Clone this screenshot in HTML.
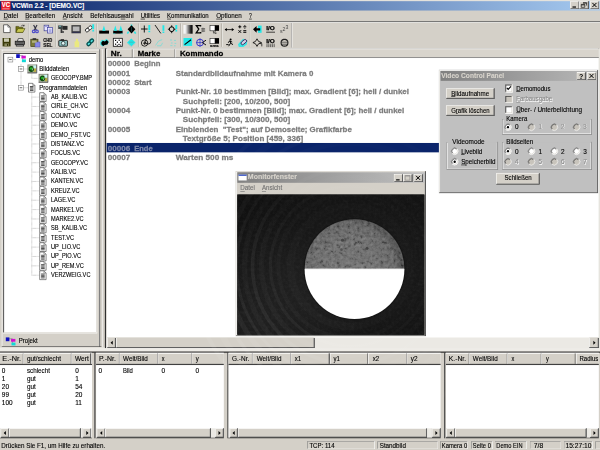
<!DOCTYPE html><html><head><meta charset="utf-8"><title>VCWin</title><style>html,body{margin:0;padding:0}body{width:600px;height:450px;overflow:hidden;background:#d4d0c8;position:relative}
#s{position:absolute;left:0;top:0;width:1024px;height:768px;transform:translateZ(0) scale(.5859375);transform-origin:0 0;font-family:"Liberation Sans",sans-serif;font-size:11px}
#s div,#s svg,#s span{position:absolute;display:block}
#s svg{overflow:visible}
.t{white-space:pre;transform-origin:0 50%}
.t u{text-decoration:underline;text-underline-offset:1px}
.raised{box-shadow:inset -1px -1px #404040,inset 1px 1px #d4d0c8,inset -2px -2px #808080,inset 2px 2px #fff}
.btn{box-shadow:inset -1px -1px #404040,inset 1px 1px #fff,inset -2px -2px #808080,inset 2px 2px #d4d0c8}
.sunk{box-shadow:inset -1px -1px #fff,inset 1px 1px #808080,inset -2px -2px #d4d0c8,inset 2px 2px #404040}
.stat{box-shadow:inset -1px -1px #fff,inset 1px 1px #808080}
.grp{box-shadow:inset 1px 1px #808080,inset -1px -1px #fff,inset 2px 2px #fff,-1px -1px 0 0 transparent;border-right:1px solid #808080;border-bottom:1px solid #808080;box-sizing:border-box}
.track{background:#ebe9e4}
</style></head><body><div id="s"><div class="" style="left:0.0px;top:0.0px;width:1024.0px;height:18.01px;background:linear-gradient(90deg,#0a246a 0%,#a6caf0 100%)"></div>
<div style="left:0.0px;top:0.0px;width:1024.0px;height:1.6px;background:#e4e2dc"></div>
<div class="" style="left:2.05px;top:1.71px;width:15.53px;height:15.36px;background:#e8202c"></div>
<span class="t" style="left:2.9px;top:0.02px;font-size:13px;line-height:16px;font-weight:700;color:#fff;transform:scaleX(0.7745);-webkit-text-stroke:.2px #fff;">VC</span>
<div class="" style="left:3.75px;top:13.65px;width:12.29px;height:2.22px;background:#f8a0a8;opacity:.75"></div>
<span class="t" style="left:19.8px;top:2.55px;font-size:11px;line-height:13px;font-weight:700;color:#fff;transform:scaleX(1.0116);-webkit-text-stroke:.2px #fff;">VCWin 2.2 - [DEMO.VC]</span>
<div class="btn" style="left:973px;top:2px;width:16px;height:14px;background:#d4d0c8"></div>
<svg style="left:973px;top:2px" width="16" height="14" viewBox="0 0 16 14"><rect x="4" y="9" width="6" height="2" fill="#000"/></svg>
<div class="btn" style="left:989px;top:2px;width:16px;height:14px;background:#d4d0c8"></div>
<svg style="left:989px;top:2px" width="16" height="14" viewBox="0 0 16 14"><path d="M6 2.5h6v5M6 3.5h6M3 5.5h6v5h-6zM3 6.5h6" fill="none" stroke="#000"/></svg>
<div class="btn" style="left:1007px;top:2px;width:16px;height:14px;background:#d4d0c8"></div>
<svg style="left:1007px;top:2px" width="16" height="14" viewBox="0 0 16 14"><path d="M4 3l7 7M11 3l-7 7" stroke="#000" stroke-width="1.7" fill="none"/></svg>
<span class="t" style="left:5.63px;top:21.32px;font-size:11px;line-height:13px;font-weight:400;color:#000;transform:scaleX(0.9767);-webkit-text-stroke:.2px #000;"><u>D</u>atei</span>
<span class="t" style="left:42.67px;top:21.32px;font-size:11px;line-height:13px;font-weight:400;color:#000;transform:scaleX(0.9621);-webkit-text-stroke:.2px #000;"><u>B</u>earbeiten</span>
<span class="t" style="left:106.67px;top:21.32px;font-size:11px;line-height:13px;font-weight:400;color:#000;transform:scaleX(0.9460);-webkit-text-stroke:.2px #000;"><u>A</u>nsicht</span>
<span class="t" style="left:153.6px;top:21.32px;font-size:11px;line-height:13px;font-weight:400;color:#000;transform:scaleX(0.9590);-webkit-text-stroke:.2px #000;">Befehlsaus<u>w</u>ahl</span>
<span class="t" style="left:239.79px;top:21.32px;font-size:11px;line-height:13px;font-weight:400;color:#000;transform:scaleX(0.9387);-webkit-text-stroke:.2px #000;"><u>U</u>tilities</span>
<span class="t" style="left:285.35px;top:21.32px;font-size:11px;line-height:13px;font-weight:400;color:#000;transform:scaleX(0.9363);-webkit-text-stroke:.2px #000;"><u>K</u>ommunikation</span>
<span class="t" style="left:368.98px;top:21.32px;font-size:11px;line-height:13px;font-weight:400;color:#000;transform:scaleX(0.9746);-webkit-text-stroke:.2px #000;"><u>O</u>ptionen</span>
<span class="t" style="left:425.3px;top:21.32px;font-size:11px;line-height:13px;font-weight:400;color:#000;transform:scaleX(0.7804);-webkit-text-stroke:.2px #000;"><u>?</u></span>
<div style="left:0.0px;top:36.35px;width:1024.0px;height:1.3px;background:#707070"></div>
<div style="left:0.0px;top:37.63px;width:1024.0px;height:1px;background:#fff"></div>
<div style="left:0.0px;top:81.75px;width:179.2px;height:1px;background:#909090"></div>
<div style="left:0.0px;top:82.77px;width:179.2px;height:1px;background:#fff"></div>
<div style="left:179.2px;top:81.83px;width:842.41px;height:1.3px;background:#505050"></div>
<div style="left:496.98px;top:39.25px;width:1px;height:41.81px;background:#808080"></div>
<div style="left:498.01px;top:39.25px;width:1px;height:41.81px;background:#fff"></div>
<div style="left:47.62px;top:40.11px;width:1px;height:40.11px;background:#a09c94"></div>
<div style="left:48.64px;top:40.11px;width:1px;height:40.11px;background:#f4f4f0"></div>
<div style="left:94.72px;top:40.11px;width:1px;height:40.11px;background:#a09c94"></div>
<div style="left:95.74px;top:40.11px;width:1px;height:40.11px;background:#f4f4f0"></div>
<div style="left:164.86px;top:40.11px;width:1px;height:40.11px;background:#a09c94"></div>
<div style="left:165.89px;top:40.11px;width:1px;height:40.11px;background:#f4f4f0"></div>
<div style="left:235.52px;top:40.11px;width:1px;height:40.11px;background:#a09c94"></div>
<div style="left:236.54px;top:40.11px;width:1px;height:40.11px;background:#f4f4f0"></div>
<div style="left:308.39px;top:40.11px;width:1px;height:40.11px;background:#a09c94"></div>
<div style="left:309.42px;top:40.11px;width:1px;height:40.11px;background:#f4f4f0"></div>
<div style="left:378.03px;top:40.11px;width:1px;height:40.11px;background:#a09c94"></div>
<div style="left:379.05px;top:40.11px;width:1px;height:40.11px;background:#f4f4f0"></div>
<div style="left:425.3px;top:40.11px;width:1px;height:40.11px;background:#a09c94"></div>
<div style="left:426.33px;top:40.11px;width:1px;height:40.11px;background:#f4f4f0"></div>
<svg style="left:0;top:0" width="1024" height="768" viewBox="0 0 600 450"><path d="M3.6 24.8h4.3l2.3 2.3v5.5h-6.6z" fill="#fff" stroke="#303030" stroke-width=".7"/><path d="M7.9 24.8v2.3h2.3" fill="none" stroke="#303030" stroke-width=".6"/><path d="M15.9 26.4h2.6l.7.8h3.6v5.1h-6.9z" fill="#707010" stroke="#303000" stroke-width=".5"/><path d="M17.9 28.6h7.1l-2.1 3.8h-7z" fill="#c8c850" stroke="#303000" stroke-width=".5"/><path d="M21.2 25.9q1.5-1.4 3 0m0 0l-.2-1.2m.2 1.2l-1.2.1" fill="none" stroke="#202020" stroke-width=".6"/><path d="M33.6 25.1L36.4 30.3M37 25.1L34.2 30.3" stroke="#303040" stroke-width="1.15" fill="none"/><circle cx="33.7" cy="31.4" r="1.3" fill="none" stroke="#5050c8" stroke-width="1.2"/><circle cx="37" cy="31.4" r="1.3" fill="none" stroke="#5050c8" stroke-width="1.2"/><rect x="44.1" y="25.2" width="4.6" height="5.6" fill="#e8e8ff" stroke="#404090" stroke-width=".7"/><rect x="47.6" y="27.4" width="5" height="5.6" fill="#f4f4ff" stroke="#4040a0" stroke-width=".7"/><path d="M48.6 29.2h3M48.6 30.4h3M48.6 31.6h3M45 26.6h2.6" stroke="#5050c0" stroke-width=".5"/><rect x="58.2" y="25.4" width="4.6" height="3.6" fill="#404848"/><rect x="62.6" y="25.9" width="4.9" height="3.9" fill="#282828"/><rect x="60.6" y="28.8" width="1.7" height="4.2" fill="#383838"/><rect x="62" y="31.2" width="2" height="1.6" fill="#484848"/><path d="M59 26.3h2" stroke="#80e0e0" stroke-width=".7"/><rect x="71.4" y="25.1" width="9.5" height="8.2" fill="#404040"/><rect x="72.8" y="26.5" width="6.7" height="4.7" fill="#b8b8b8"/><path d="M72.5 32.3h7.3" stroke="#202060" stroke-width=".6"/><g fill="#fff" stroke="#282828" stroke-width=".9"><rect x="85.3" y="28.4" width="4.2" height="3.2" rx="1.5" transform="rotate(-35 87.4 30)"/><rect x="88" y="26.2" width="4.2" height="3.2" rx="1.5" transform="rotate(-35 90.1 27.8)"/></g><path d="M93.2 24.3V29.3" stroke="#20e8e8" stroke-width="1.9"/><rect x="92.3" y="30.1" width="1.8" height="1.4" fill="#20e8e8"/><rect x="99.2" y="30.6" width="9.8" height="3" fill="#000"/><path d="M103.9 25.6l1.6 5.2h-3.2z" fill="#20e8e8"/><rect x="113.2" y="30.6" width="9.4" height="3" fill="#000"/><path d="M115.3 25.4l1.6 5.4h-3.2zM120.8 25.4l1.6 5.4h-3.2z" fill="#20e8e8"/><path d="M113.2 33.7h2.2M120.6 33.7h2.2" stroke="#20e8e8" stroke-width=".5"/><path d="M128.6 31.6l-1.2 2M134.4 31.6l1.2 2M131.5 24.6v1.5" stroke="#20e8e8" stroke-width="1.5"/><path d="M131.5 25.2l3.9 4.1-3.9 4.1-3.9-4.1z" fill="#000"/><path d="M131.5 27v4.6" stroke="#105050" stroke-width=".7"/><path d="M141 29h6.6M144.3 25.5v7" stroke="#000" stroke-width=".9"/><path d="M149.3 25V30.000000000000004" stroke="#20e8e8" stroke-width="1.9"/><rect x="148.4" y="30.800000000000004" width="1.8" height="1.4" fill="#20e8e8"/><path d="M155 25l5.8 8.4" stroke="#101010" stroke-width=".9"/><path d="M163.4 25.3V30.8" stroke="#20e8e8" stroke-width="1.9"/><rect x="162.5" y="31.6" width="1.8" height="1.4" fill="#20e8e8"/><circle cx="171.7" cy="29.2" r="2.4" fill="none" stroke="#000" stroke-width="1"/><path d="M171.7 25.3v2M171.7 31v2.2M167.9 29.2h2M173.6 29.2h2" stroke="#000" stroke-width=".9"/><path d="M176.3 25V29.3" stroke="#20e8e8" stroke-width="1.9"/><rect x="175.4" y="30.1" width="1.8" height="1.4" fill="#20e8e8"/><defs><linearGradient id="gwb"><stop offset="0" stop-color="#fff"/><stop offset=".25" stop-color="#e8e8e8"/><stop offset=".8" stop-color="#202020"/><stop offset="1" stop-color="#000"/></linearGradient></defs><rect x="183.5" y="25" width="9.1" height="8.7" fill="url(#gwb)"/><path d="M200.6 26.4v-.8h-4.3l2.5 3.5-2.6 3.7h4.5v-.9" fill="none" stroke="#000" stroke-width="1.25"/><path d="M201.3 28.6h3.8M201.3 29.9h3.8M201.3 31.2h3.8" stroke="#404040" stroke-width=".7"/><path d="M202.9 27.6v4.6" stroke="#404040" stroke-width=".5"/><rect x="210" y="25.5" width="5" height="5.3" fill="#fff" stroke="#202020" stroke-width=".6"/><rect x="215" y="25.2" width="4" height="5.6" fill="#000"/><text x="214.6" y="34" font-family="Liberation Sans" font-weight="700" font-size="4.2" text-anchor="middle" fill="#101010">%</text><path d="M225 29.6h8.6" stroke="#000" stroke-width=".8"/><path d="M224.6 29.6l2.2-1.6v3.2zM234 29.6l-2.2-1.6v3.2z" fill="#000"/><path d="M238.3 26.8h3M239.8 25.3v3M243.3 26.8h3M238.5 30.2l2.6 2.6M241.1 30.2l-2.6 2.6M243.3 30.7h3M243.3 32.3h3" stroke="#000" stroke-width="1"/><rect x="244.4" y="25" width=".9" height=".9" fill="#000"/><rect x="244.4" y="27.8" width=".9" height=".9" fill="#000"/><rect x="258" y="25.6" width="3.6" height="7.2" fill="#20e8e8"/><path d="M253 29.3l3.6-3.4v2.3h3.6v2.2h-3.6v2.3z" fill="#000"/><text x="270.5" y="30.4" font-family="Liberation Sans" font-weight="700" font-size="5.6" text-anchor="middle" textLength="8.6" lengthAdjust="spacingAndGlyphs" fill="#000" stroke="#000" stroke-width=".25">I/O</text><path d="M266.2 32.2h8.8" stroke="#000" stroke-width=".7"/><text x="280" y="33" font-family="Liberation Sans" font-size="5.2" fill="#484848">s</text><text x="282.6" y="31" font-family="Liberation Sans" font-size="5.2" fill="#484848">2</text><text x="285.4" y="29.4" font-family="Liberation Sans" font-size="5.2" fill="#484848">3</text><rect x="2.6" y="38" width="8" height="8.4" fill="#3a3a08"/><rect x="4" y="38.4" width="5" height="3.4" fill="#c8c8b0"/><rect x="4.4" y="43.4" width="4.4" height="3" fill="#8a8a60"/><rect x="7" y="43.9" width="1.1" height="2" fill="#303008"/><path d="M17.3 41.4l1-2.8h4.6l.6 2.8z" fill="#f0f0f0" stroke="#202020" stroke-width=".7"/><rect x="15.2" y="41.2" width="9.3" height="3.4" fill="#686868" stroke="#101010" stroke-width=".7"/><path d="M16.6 44.6h6.6l.6 1.5h-7.8z" fill="#b0b0b0" stroke="#101010" stroke-width=".7"/><path d="M16.4 42.8h6.8" stroke="#404040" stroke-width=".5"/><rect x="30.8" y="39.2" width="7.2" height="7.4" fill="#7c7c38" stroke="#303010" stroke-width=".6"/><rect x="32.6" y="38.2" width="3.6" height="1.8" fill="#303030"/><rect x="35" y="42" width="5" height="5" fill="#8888e8" stroke="#5050a0" stroke-width=".5"/><rect x="32" y="40.6" width="4.6" height="2.2" fill="#b0b080"/><text x="47.8" y="42.2" font-family="Liberation Sans" font-weight="700" font-size="4.9" text-anchor="middle" textLength="9" lengthAdjust="spacingAndGlyphs" fill="#101010" stroke="#101010" stroke-width=".2">CHD</text><text x="47.8" y="46.8" font-family="Liberation Sans" font-weight="700" font-size="4.9" text-anchor="middle" textLength="9" lengthAdjust="spacingAndGlyphs" fill="#101010" stroke="#101010" stroke-width=".2">SEL</text><rect x="58.8" y="40.4" width="8.6" height="5.8" rx=".6" fill="#90c8c8" stroke="#181818" stroke-width=".9"/><rect x="60.6" y="39.2" width="3.4" height="1.4" fill="#202020"/><circle cx="63.2" cy="43.3" r="1.9" fill="#e0f4f4" stroke="#283838" stroke-width=".8"/><rect x="74.6" y="41.4" width="4.6" height="5.8" fill="#f2f268" opacity=".75"/><rect x="75.9" y="38.8" width="2" height="3" fill="#f2f268" opacity=".75"/><path d="M86.4 43.5l3-3 2.4-2.4 2.4 2-2.4 3-2.6 3z" fill="#20e8e8" opacity=".75"/><g fill="none" stroke="#0c5050" stroke-width="1.35"><rect x="86.9" y="42.3" width="4" height="3" rx="1.4" transform="rotate(-40 88.9 43.8)"/><rect x="89.6" y="39.4" width="4" height="3" rx="1.4" transform="rotate(-40 91.6 40.9)"/></g><path d="M100 42.6l2-2.8 2.2.8 2.4-1.8 2.4 2.6-1.4 3-3.2.8-1.8 1.2-2.2-1.6z" fill="#20e8e8" opacity=".8"/><path d="M101.2 42.8l1.6-2 2 .8 2-1.6 1.8 2-1.2 2.6-2.8.4-1.4 1-1.6-1.2z" fill="#000"/><rect x="113.3" y="38.3" width="9" height="8" fill="#fff" stroke="#101010" stroke-width=".8"/><g fill="#000"><rect x="115" y="39.8" width="1.2" height="1.2"/><rect x="118.6" y="39.6" width="1.2" height="1.2"/><rect x="116.8" y="41.6" width="1.2" height="1.2"/><rect x="120" y="41.8" width="1.1" height="1.1"/><rect x="115" y="43.6" width="1.2" height="1.2"/><rect x="118.4" y="43.8" width="1.2" height="1.2"/><rect x="120.2" y="44.6" width="1" height="1"/><rect x="116.8" y="44.8" width="1" height="1"/></g><path d="M131.3 38.6l4.2 3.8-4.2 3.8-4.2-3.8z" fill="#20e8e8"/><path d="M127.4 43.4l3.9 3.2 3.9-3.2" fill="none" stroke="#90c8c8" stroke-width=".8"/><path d="M129 42.2h4.6" stroke="#60a0a0" stroke-width=".6"/><circle cx="144.6" cy="43" r="3.2" fill="none" stroke="#000" stroke-width=".8"/><circle cx="148" cy="41.2" r="2.9" fill="none" stroke="#000" stroke-width=".8"/><path d="M143 43.2h3.4M144.7 41.5v3.4" stroke="#000" stroke-width=".8"/><g opacity=".4" stroke="#20e8e8" stroke-width="1" fill="none"><path d="M155.6 45.4l3-4.4 3.6-1.4M157 45.8h4l1.6-3"/></g><g opacity=".4" stroke="#20e8e8" stroke-width="1" fill="none"><path d="M170 40h2M174 40.4h2M171 43h1.6M174.6 43.4h1.6M170.4 45.6h2M174 45.8h1.6"/></g><rect x="183.5" y="38" width="8.6" height="7.9" fill="#20e8e8"/><path d="M184.6 44.6l6.4-4.8" stroke="#000" stroke-width="1.1"/><circle cx="200" cy="42.6" r="3.4" fill="none" stroke="#2828c8" stroke-width=".9"/><path d="M200 38.4v8.4M196.4 42.6h5.6" stroke="#2828c8" stroke-width=".7"/><path d="M206 40.2l-3.6 2.4 3.6 2.4" fill="none" stroke="#000" stroke-width=".9"/><rect x="210" y="38.4" width="5" height="5.3" fill="#fff" stroke="#202020" stroke-width=".6"/><rect x="215" y="38.1" width="4" height="5.6" fill="#000"/><text x="214.4" y="47" font-family="Liberation Sans" font-weight="700" font-size="4.4" text-anchor="middle" fill="#101010" stroke="#101010" stroke-width=".2">sms</text><circle cx="230.6" cy="39.5" r="1" fill="#000"/><path d="M229.8 40.6l-1.6 2.2M230 40.8l.6 2.4-2 3M230.6 43.2l2.4 1.4M229.6 41.2l2.6.8M226.2 44.6h2.4" stroke="#000" stroke-width=".95" fill="none"/><path d="M238 44.2l5-5.4 4.4 1.4-.6 4.4-3.4 2.4h-4.6z" fill="#20e8e8" opacity=".85"/><rect x="240.6" y="40.6" width="6.4" height="3" rx="1.5" transform="rotate(-40 243.8 42.1)" fill="#d0d0e8" stroke="#402860" stroke-width=".9"/><path d="M257 38.8l1.5 2.6 3 1.2-3 1.2-1.5 2.6-1.5-2.6-2.6-1.2 2.6-1.2z" fill="none" stroke="#000" stroke-width=".8"/><path d="M259.4 43.6h2.4v2.8" fill="none" stroke="#000" stroke-width=".7"/><text x="270.5" y="43" font-family="Liberation Sans" font-weight="700" font-size="5.6" text-anchor="middle" textLength="8.6" lengthAdjust="spacingAndGlyphs" fill="#000" stroke="#000" stroke-width=".25">I/O</text><path d="M266.4 44.2h8.6M266.4 45.4h8.6M266.4 46.6h8.6" stroke="#303030" stroke-width=".7" stroke-dasharray="1.2 .6"/><circle cx="284.5" cy="42.8" r="3.4" fill="none" stroke="#202020" stroke-width="1.15"/><path d="M281 42.2h7M282 44.2h5" stroke="#303030" stroke-width=".7"/><path d="M282.2 40.2l1.2-1M286.8 40.2l-1.2-1" stroke="#303030" stroke-width=".7"/></svg>
<div style="left:2.73px;top:84.65px;width:1px;height:507.56px;background:#fff"></div>
<div style="left:2.73px;top:84.65px;width:167.94px;height:1px;background:#fff"></div>
<div class="sunk" style="left:5.46px;top:90.28px;width:160.6px;height:478.72px;background:#fff"></div>
<div style="left:169.13px;top:83.63px;width:1.4px;height:508.59px;background:#808080"></div>
<div style="left:174.42px;top:83.63px;width:1px;height:509.44px;background:#fff"></div>
<div style="left:3.41px;top:591.02px;width:169.81px;height:1.4px;background:#404040"></div>
<div class="" style="left:0.0px;top:593.24px;width:1024.0px;height:6.66px;background:#eeece7"></div>
<span class="t" style="left:32.43px;top:575.99px;font-size:11px;line-height:13px;font-weight:400;color:#000;transform:scaleX(0.9469);-webkit-text-stroke:.2px #000;">Projekt</span>
<span class="t" style="left:49.49px;top:95.22px;font-size:11px;line-height:13px;font-weight:400;color:#000;transform:scaleX(0.8990);-webkit-text-stroke:.2px #000;">demo</span>
<span class="t" style="left:67.41px;top:111.22px;font-size:11px;line-height:13px;font-weight:400;color:#000;transform:scaleX(0.9405);-webkit-text-stroke:.2px #000;">Bilddateien</span>
<span class="t" style="left:87.04px;top:127.22px;font-size:11px;line-height:13px;font-weight:400;color:#000;transform:scaleX(0.8627);-webkit-text-stroke:.2px #000;">GEOCOPY.BMP</span>
<span class="t" style="left:67.41px;top:143.22px;font-size:11px;line-height:13px;font-weight:400;color:#000;transform:scaleX(0.9369);-webkit-text-stroke:.2px #000;">Programmdateien</span>
<span class="t" style="left:87.04px;top:159.22px;font-size:11px;line-height:13px;font-weight:400;color:#000;transform:scaleX(0.8736);-webkit-text-stroke:.2px #000;">AB_KALIB.VC</span>
<span class="t" style="left:87.04px;top:175.22px;font-size:11px;line-height:13px;font-weight:400;color:#000;transform:scaleX(0.8680);-webkit-text-stroke:.2px #000;">CIRLE_CH.VC</span>
<span class="t" style="left:87.04px;top:191.22px;font-size:11px;line-height:13px;font-weight:400;color:#000;transform:scaleX(0.8954);-webkit-text-stroke:.2px #000;">COUNT.VC</span>
<span class="t" style="left:87.04px;top:207.22px;font-size:11px;line-height:13px;font-weight:400;color:#000;transform:scaleX(0.8750);-webkit-text-stroke:.2px #000;">DEMO.VC</span>
<span class="t" style="left:87.04px;top:223.22px;font-size:11px;line-height:13px;font-weight:400;color:#000;transform:scaleX(0.8750);-webkit-text-stroke:.2px #000;">DEMO_FST.VC</span>
<span class="t" style="left:87.04px;top:239.22px;font-size:11px;line-height:13px;font-weight:400;color:#000;transform:scaleX(0.8750);-webkit-text-stroke:.2px #000;">DISTANZ.VC</span>
<span class="t" style="left:87.04px;top:255.22px;font-size:11px;line-height:13px;font-weight:400;color:#000;transform:scaleX(0.8750);-webkit-text-stroke:.2px #000;">FOCUS.VC</span>
<span class="t" style="left:87.04px;top:271.22px;font-size:11px;line-height:13px;font-weight:400;color:#000;transform:scaleX(0.8750);-webkit-text-stroke:.2px #000;">GEOCOPY.VC</span>
<span class="t" style="left:87.04px;top:287.22px;font-size:11px;line-height:13px;font-weight:400;color:#000;transform:scaleX(0.8750);-webkit-text-stroke:.2px #000;">KALIB.VC</span>
<span class="t" style="left:87.04px;top:303.22px;font-size:11px;line-height:13px;font-weight:400;color:#000;transform:scaleX(0.8750);-webkit-text-stroke:.2px #000;">KANTEN.VC</span>
<span class="t" style="left:87.04px;top:319.22px;font-size:11px;line-height:13px;font-weight:400;color:#000;transform:scaleX(0.8750);-webkit-text-stroke:.2px #000;">KREUZ.VC</span>
<span class="t" style="left:87.04px;top:335.22px;font-size:11px;line-height:13px;font-weight:400;color:#000;transform:scaleX(0.8750);-webkit-text-stroke:.2px #000;">LAGE.VC</span>
<span class="t" style="left:87.04px;top:351.22px;font-size:11px;line-height:13px;font-weight:400;color:#000;transform:scaleX(0.8750);-webkit-text-stroke:.2px #000;">MARKE1.VC</span>
<span class="t" style="left:87.04px;top:367.22px;font-size:11px;line-height:13px;font-weight:400;color:#000;transform:scaleX(0.8750);-webkit-text-stroke:.2px #000;">MARKE2.VC</span>
<span class="t" style="left:87.04px;top:383.22px;font-size:11px;line-height:13px;font-weight:400;color:#000;transform:scaleX(0.8750);-webkit-text-stroke:.2px #000;">SB_KALIB.VC</span>
<span class="t" style="left:87.04px;top:399.22px;font-size:11px;line-height:13px;font-weight:400;color:#000;transform:scaleX(0.8750);-webkit-text-stroke:.2px #000;">TEST.VC</span>
<span class="t" style="left:87.04px;top:415.22px;font-size:11px;line-height:13px;font-weight:400;color:#000;transform:scaleX(0.8750);-webkit-text-stroke:.2px #000;">UP_LIO.VC</span>
<span class="t" style="left:87.04px;top:431.22px;font-size:11px;line-height:13px;font-weight:400;color:#000;transform:scaleX(0.8750);-webkit-text-stroke:.2px #000;">UP_PIO.VC</span>
<span class="t" style="left:87.04px;top:447.22px;font-size:11px;line-height:13px;font-weight:400;color:#000;transform:scaleX(0.8750);-webkit-text-stroke:.2px #000;">UP_REM.VC</span>
<span class="t" style="left:87.04px;top:463.22px;font-size:11px;line-height:13px;font-weight:400;color:#000;transform:scaleX(0.8750);-webkit-text-stroke:.2px #000;">VERZWEIG.VC</span>
<svg style="left:0;top:0" width="1024" height="768" viewBox="0 0 600 450"><path d="M7.4 338.79999999999995H12.399999999999999V343.4" fill="none" stroke="#606060" stroke-width=".5"/><rect x="5.8" y="337.4" width="3.6" height="3.8" fill="#1010c0"/><rect x="11.0" y="338.9" width="4.4" height="2.8" fill="#d010d0"/><rect x="11.5" y="342.59999999999997" width="4" height="2.8" fill="#10d8d8"/><path d="M17.8 55.6H22.799999999999997V60.2" fill="none" stroke="#606060" stroke-width=".5"/><rect x="16.2" y="54.2" width="3.6" height="3.8" fill="#1010c0"/><rect x="21.4" y="55.7" width="4.4" height="2.8" fill="#d010d0"/><rect x="21.9" y="59.400000000000006" width="4" height="2.8" fill="#10d8d8"/><rect x="27.400000000000002" y="64.475" width="9.4" height="8.6" fill="#8c8c84"/><path d="M27.400000000000002 73.075h9.4v-8.6" fill="none" stroke="#404040" stroke-width=".6"/><rect x="28.400000000000002" y="65.375" width="7.6" height="6.6" fill="#b8d0b0"/><rect x="33.2" y="65.475" width="2.8" height="2.6" fill="#c8f4f4"/><rect x="33.6" y="68.675" width="2.4" height="3.2" fill="#b8a840"/><ellipse cx="31.3" cy="68.975" rx="2.7" ry="2.9" fill="#0c480c"/><circle cx="31.1" cy="68.575" r="1.25" fill="#20b828"/><path d="M33.4 67.075l-1.2 3.4" stroke="#e8f8e0" stroke-width=".6"/><rect x="38.6" y="73.85" width="9.4" height="8.6" fill="#8c8c84"/><path d="M38.6 82.45h9.4v-8.6" fill="none" stroke="#404040" stroke-width=".6"/><rect x="39.6" y="74.75" width="7.6" height="6.6" fill="#b8d0b0"/><rect x="44.4" y="74.85" width="2.8" height="2.6" fill="#c8f4f4"/><rect x="44.8" y="78.05" width="2.4" height="3.2" fill="#b8a840"/><ellipse cx="42.5" cy="78.35" rx="2.7" ry="2.9" fill="#0c480c"/><circle cx="42.3" cy="77.95" r="1.25" fill="#20b828"/><path d="M44.6 76.45l-1.2 3.4" stroke="#e8f8e0" stroke-width=".6"/><path d="M28.5 83.32499999999999h4.2l2.2 2.2v6.6h-6.4z" fill="#fff" stroke="#585858" stroke-width=".7"/><path d="M32.7 83.32499999999999v2.2h2.2" fill="none" stroke="#585858" stroke-width=".5"/><path d="M29.9 86.52499999999999h3.6M29.9 87.82499999999999h3.6M29.9 89.12499999999999h3.6M29.9 90.42499999999998h3.6" stroke="#303030" stroke-width=".85"/><path d="M39.7 92.69999999999999h4.2l2.2 2.2v6.6h-6.4z" fill="#fff" stroke="#585858" stroke-width=".7"/><path d="M43.900000000000006 92.69999999999999v2.2h2.2" fill="none" stroke="#585858" stroke-width=".5"/><path d="M41.1 95.89999999999999h3.6M41.1 97.19999999999999h3.6M41.1 98.49999999999999h3.6M41.1 99.79999999999998h3.6" stroke="#303030" stroke-width=".85"/><path d="M39.7 102.07499999999999h4.2l2.2 2.2v6.6h-6.4z" fill="#fff" stroke="#585858" stroke-width=".7"/><path d="M43.900000000000006 102.07499999999999v2.2h2.2" fill="none" stroke="#585858" stroke-width=".5"/><path d="M41.1 105.27499999999999h3.6M41.1 106.57499999999999h3.6M41.1 107.87499999999999h3.6M41.1 109.17499999999998h3.6" stroke="#303030" stroke-width=".85"/><path d="M39.7 111.44999999999999h4.2l2.2 2.2v6.6h-6.4z" fill="#fff" stroke="#585858" stroke-width=".7"/><path d="M43.900000000000006 111.44999999999999v2.2h2.2" fill="none" stroke="#585858" stroke-width=".5"/><path d="M41.1 114.64999999999999h3.6M41.1 115.94999999999999h3.6M41.1 117.24999999999999h3.6M41.1 118.54999999999998h3.6" stroke="#303030" stroke-width=".85"/><path d="M39.7 120.82499999999999h4.2l2.2 2.2v6.6h-6.4z" fill="#fff" stroke="#585858" stroke-width=".7"/><path d="M43.900000000000006 120.82499999999999v2.2h2.2" fill="none" stroke="#585858" stroke-width=".5"/><path d="M41.1 124.02499999999999h3.6M41.1 125.32499999999999h3.6M41.1 126.62499999999999h3.6M41.1 127.92499999999998h3.6" stroke="#303030" stroke-width=".85"/><path d="M39.7 130.2h4.2l2.2 2.2v6.6h-6.4z" fill="#fff" stroke="#585858" stroke-width=".7"/><path d="M43.900000000000006 130.2v2.2h2.2" fill="none" stroke="#585858" stroke-width=".5"/><path d="M41.1 133.39999999999998h3.6M41.1 134.7h3.6M41.1 136.0h3.6M41.1 137.29999999999998h3.6" stroke="#303030" stroke-width=".85"/><path d="M39.7 139.575h4.2l2.2 2.2v6.6h-6.4z" fill="#fff" stroke="#585858" stroke-width=".7"/><path d="M43.900000000000006 139.575v2.2h2.2" fill="none" stroke="#585858" stroke-width=".5"/><path d="M41.1 142.77499999999998h3.6M41.1 144.075h3.6M41.1 145.375h3.6M41.1 146.67499999999998h3.6" stroke="#303030" stroke-width=".85"/><path d="M39.7 148.95h4.2l2.2 2.2v6.6h-6.4z" fill="#fff" stroke="#585858" stroke-width=".7"/><path d="M43.900000000000006 148.95v2.2h2.2" fill="none" stroke="#585858" stroke-width=".5"/><path d="M41.1 152.14999999999998h3.6M41.1 153.45h3.6M41.1 154.75h3.6M41.1 156.04999999999998h3.6" stroke="#303030" stroke-width=".85"/><path d="M39.7 158.325h4.2l2.2 2.2v6.6h-6.4z" fill="#fff" stroke="#585858" stroke-width=".7"/><path d="M43.900000000000006 158.325v2.2h2.2" fill="none" stroke="#585858" stroke-width=".5"/><path d="M41.1 161.52499999999998h3.6M41.1 162.825h3.6M41.1 164.125h3.6M41.1 165.42499999999998h3.6" stroke="#303030" stroke-width=".85"/><path d="M39.7 167.7h4.2l2.2 2.2v6.6h-6.4z" fill="#fff" stroke="#585858" stroke-width=".7"/><path d="M43.900000000000006 167.7v2.2h2.2" fill="none" stroke="#585858" stroke-width=".5"/><path d="M41.1 170.89999999999998h3.6M41.1 172.2h3.6M41.1 173.5h3.6M41.1 174.79999999999998h3.6" stroke="#303030" stroke-width=".85"/><path d="M39.7 177.075h4.2l2.2 2.2v6.6h-6.4z" fill="#fff" stroke="#585858" stroke-width=".7"/><path d="M43.900000000000006 177.075v2.2h2.2" fill="none" stroke="#585858" stroke-width=".5"/><path d="M41.1 180.27499999999998h3.6M41.1 181.575h3.6M41.1 182.875h3.6M41.1 184.17499999999998h3.6" stroke="#303030" stroke-width=".85"/><path d="M39.7 186.45h4.2l2.2 2.2v6.6h-6.4z" fill="#fff" stroke="#585858" stroke-width=".7"/><path d="M43.900000000000006 186.45v2.2h2.2" fill="none" stroke="#585858" stroke-width=".5"/><path d="M41.1 189.64999999999998h3.6M41.1 190.95h3.6M41.1 192.25h3.6M41.1 193.54999999999998h3.6" stroke="#303030" stroke-width=".85"/><path d="M39.7 195.825h4.2l2.2 2.2v6.6h-6.4z" fill="#fff" stroke="#585858" stroke-width=".7"/><path d="M43.900000000000006 195.825v2.2h2.2" fill="none" stroke="#585858" stroke-width=".5"/><path d="M41.1 199.02499999999998h3.6M41.1 200.325h3.6M41.1 201.625h3.6M41.1 202.92499999999998h3.6" stroke="#303030" stroke-width=".85"/><path d="M39.7 205.2h4.2l2.2 2.2v6.6h-6.4z" fill="#fff" stroke="#585858" stroke-width=".7"/><path d="M43.900000000000006 205.2v2.2h2.2" fill="none" stroke="#585858" stroke-width=".5"/><path d="M41.1 208.39999999999998h3.6M41.1 209.7h3.6M41.1 211.0h3.6M41.1 212.29999999999998h3.6" stroke="#303030" stroke-width=".85"/><path d="M39.7 214.575h4.2l2.2 2.2v6.6h-6.4z" fill="#fff" stroke="#585858" stroke-width=".7"/><path d="M43.900000000000006 214.575v2.2h2.2" fill="none" stroke="#585858" stroke-width=".5"/><path d="M41.1 217.77499999999998h3.6M41.1 219.075h3.6M41.1 220.375h3.6M41.1 221.67499999999998h3.6" stroke="#303030" stroke-width=".85"/><path d="M39.7 223.95h4.2l2.2 2.2v6.6h-6.4z" fill="#fff" stroke="#585858" stroke-width=".7"/><path d="M43.900000000000006 223.95v2.2h2.2" fill="none" stroke="#585858" stroke-width=".5"/><path d="M41.1 227.14999999999998h3.6M41.1 228.45h3.6M41.1 229.75h3.6M41.1 231.04999999999998h3.6" stroke="#303030" stroke-width=".85"/><path d="M39.7 233.325h4.2l2.2 2.2v6.6h-6.4z" fill="#fff" stroke="#585858" stroke-width=".7"/><path d="M43.900000000000006 233.325v2.2h2.2" fill="none" stroke="#585858" stroke-width=".5"/><path d="M41.1 236.52499999999998h3.6M41.1 237.825h3.6M41.1 239.125h3.6M41.1 240.42499999999998h3.6" stroke="#303030" stroke-width=".85"/><path d="M39.7 242.7h4.2l2.2 2.2v6.6h-6.4z" fill="#fff" stroke="#585858" stroke-width=".7"/><path d="M43.900000000000006 242.7v2.2h2.2" fill="none" stroke="#585858" stroke-width=".5"/><path d="M41.1 245.89999999999998h3.6M41.1 247.2h3.6M41.1 248.5h3.6M41.1 249.79999999999998h3.6" stroke="#303030" stroke-width=".85"/><path d="M39.7 252.07500000000002h4.2l2.2 2.2v6.6h-6.4z" fill="#fff" stroke="#585858" stroke-width=".7"/><path d="M43.900000000000006 252.07500000000002v2.2h2.2" fill="none" stroke="#585858" stroke-width=".5"/><path d="M41.1 255.275h3.6M41.1 256.57500000000005h3.6M41.1 257.875h3.6M41.1 259.175h3.6" stroke="#303030" stroke-width=".85"/><path d="M39.7 261.45000000000005h4.2l2.2 2.2v6.6h-6.4z" fill="#fff" stroke="#585858" stroke-width=".7"/><path d="M43.900000000000006 261.45000000000005v2.2h2.2" fill="none" stroke="#585858" stroke-width=".5"/><path d="M41.1 264.65000000000003h3.6M41.1 265.95000000000005h3.6M41.1 267.25000000000006h3.6M41.1 268.55000000000007h3.6" stroke="#303030" stroke-width=".85"/><path d="M39.7 270.82500000000005h4.2l2.2 2.2v6.6h-6.4z" fill="#fff" stroke="#585858" stroke-width=".7"/><path d="M43.900000000000006 270.82500000000005v2.2h2.2" fill="none" stroke="#585858" stroke-width=".5"/><path d="M41.1 274.02500000000003h3.6M41.1 275.32500000000005h3.6M41.1 276.62500000000006h3.6M41.1 277.92500000000007h3.6" stroke="#303030" stroke-width=".85"/><path d="M12.8 59.6H16" stroke="#909090" stroke-width=".6" stroke-dasharray=".6 .6" fill="none"/><path d="M21 64.1V85.125M23.4 68.975H27.5M23.4 87.725H28.5M31.8 73.375V78.35H38.6M31.8 92.32499999999999V275.225" stroke="#909090" stroke-width=".6" stroke-dasharray=".6 .6" fill="none"/><path d="M31.8 97.1H39.6M31.8 106.475H39.6M31.8 115.85H39.6M31.8 125.225H39.6M31.8 134.6H39.6M31.8 143.975H39.6M31.8 153.35H39.6M31.8 162.725H39.6M31.8 172.1H39.6M31.8 181.475H39.6M31.8 190.85H39.6M31.8 200.225H39.6M31.8 209.6H39.6M31.8 218.975H39.6M31.8 228.35H39.6M31.8 237.725H39.6M31.8 247.1H39.6M31.8 256.475H39.6M31.8 265.85H39.6M31.8 275.225H39.6" stroke="#909090" stroke-width=".6" stroke-dasharray=".6 .6" fill="none"/><rect x="8.0" y="57.2" width="4.8" height="4.8" fill="#fff" stroke="#808080" stroke-width=".6"/><path d="M9.1 59.6h2.6" stroke="#000" stroke-width=".6"/><rect x="18.6" y="66.57499999999999" width="4.8" height="4.8" fill="#fff" stroke="#808080" stroke-width=".6"/><path d="M19.7 68.975h2.6" stroke="#000" stroke-width=".6"/><rect x="18.6" y="85.32499999999999" width="4.8" height="4.8" fill="#fff" stroke="#808080" stroke-width=".6"/><path d="M19.7 87.725h2.6" stroke="#000" stroke-width=".6"/></svg>
<div style="left:179.2px;top:82.94px;width:2.2px;height:510.81px;background:#303030"></div>
<div class="" style="left:181.59px;top:82.94px;width:840.02px;height:509.61px;background:#fff"></div>
<div class="" style="left:1021.61px;top:82.94px;width:2.39px;height:509.61px;background:#e6e4de"></div>
<div class="" style="left:181.59px;top:83.11px;width:840.02px;height:15.36px;background:#d8d4cc"></div>
<div style="left:181.59px;top:97.96px;width:840.02px;height:1.5px;background:#505050"></div>
<div style="left:181.93px;top:83.63px;width:1px;height:14.34px;background:#fff"></div>
<div style="left:181.93px;top:83.46px;width:44.71px;height:1px;background:#fff"></div>
<div style="left:225.45px;top:83.63px;width:1px;height:14.34px;background:#606060"></div>
<div style="left:226.82px;top:83.63px;width:1px;height:14.34px;background:#fff"></div>
<div style="left:226.82px;top:83.46px;width:72.36px;height:1px;background:#fff"></div>
<div style="left:297.98px;top:83.63px;width:1px;height:14.34px;background:#606060"></div>
<div style="left:299.35px;top:83.63px;width:1px;height:14.34px;background:#fff"></div>
<div style="left:299.35px;top:83.46px;width:721.92px;height:1px;background:#fff"></div>
<span class="t" style="left:188.76px;top:82.62px;font-size:13.7px;line-height:16px;font-weight:700;color:#000;transform:scaleX(1.0276);-webkit-text-stroke:.45px #000;">Nr.</span>
<span class="t" style="left:234.84px;top:82.62px;font-size:13.7px;line-height:16px;font-weight:700;color:#000;transform:scaleX(0.9745);-webkit-text-stroke:.45px #000;">Marke</span>
<span class="t" style="left:306.52px;top:82.62px;font-size:13.7px;line-height:16px;font-weight:700;color:#000;transform:scaleX(0.9839);-webkit-text-stroke:.45px #000;">Kommando</span>
<span class="t" style="left:183.64px;top:100.97px;font-size:13.7px;line-height:16px;font-weight:700;color:#7c7c7c;transform:scaleX(1.0089);-webkit-text-stroke:.45px #7c7c7c;">00000</span>
<span class="t" style="left:228.69px;top:100.97px;font-size:13.7px;line-height:16px;font-weight:700;color:#7c7c7c;transform:scaleX(0.9638);-webkit-text-stroke:.45px #7c7c7c;">Beginn</span>
<span class="t" style="left:183.64px;top:116.97px;font-size:13.7px;line-height:16px;font-weight:700;color:#7c7c7c;transform:scaleX(1.0089);-webkit-text-stroke:.45px #7c7c7c;">00001</span>
<span class="t" style="left:300.37px;top:116.97px;font-size:13.7px;line-height:16px;font-weight:700;color:#7c7c7c;transform:scaleX(0.9857);-webkit-text-stroke:.45px #7c7c7c;white-space:pre;">Standardbildaufnahme mit Kamera 0</span>
<span class="t" style="left:183.64px;top:132.97px;font-size:13.7px;line-height:16px;font-weight:700;color:#7c7c7c;transform:scaleX(1.0089);-webkit-text-stroke:.45px #7c7c7c;">00002</span>
<span class="t" style="left:228.69px;top:132.97px;font-size:13.7px;line-height:16px;font-weight:700;color:#7c7c7c;transform:scaleX(0.9578);-webkit-text-stroke:.45px #7c7c7c;">Start</span>
<span class="t" style="left:183.64px;top:148.97px;font-size:13.7px;line-height:16px;font-weight:700;color:#7c7c7c;transform:scaleX(1.0089);-webkit-text-stroke:.45px #7c7c7c;">00003</span>
<span class="t" style="left:300.37px;top:148.97px;font-size:13.7px;line-height:16px;font-weight:700;color:#7c7c7c;transform:scaleX(0.9892);-webkit-text-stroke:.45px #7c7c7c;white-space:pre;">Punkt-Nr. 10 bestimmen [Bild]; max. Gradient [6]; hell / dunkel</span>
<span class="t" style="left:312.32px;top:164.97px;font-size:13.7px;line-height:16px;font-weight:700;color:#7c7c7c;transform:scaleX(1.0090);-webkit-text-stroke:.45px #7c7c7c;white-space:pre;">Suchpfeil: [200, 10/200, 500]</span>
<span class="t" style="left:183.64px;top:180.97px;font-size:13.7px;line-height:16px;font-weight:700;color:#7c7c7c;transform:scaleX(1.0089);-webkit-text-stroke:.45px #7c7c7c;">00004</span>
<span class="t" style="left:300.37px;top:180.97px;font-size:13.7px;line-height:16px;font-weight:700;color:#7c7c7c;transform:scaleX(0.9875);-webkit-text-stroke:.45px #7c7c7c;white-space:pre;">Punkt-Nr. 0 bestimmen [Bild]; max. Gradient [6]; hell / dunkel</span>
<span class="t" style="left:312.32px;top:196.97px;font-size:13.7px;line-height:16px;font-weight:700;color:#7c7c7c;transform:scaleX(1.0090);-webkit-text-stroke:.45px #7c7c7c;white-space:pre;">Suchpfeil: [300, 10/300, 500]</span>
<span class="t" style="left:183.64px;top:212.97px;font-size:13.7px;line-height:16px;font-weight:700;color:#7c7c7c;transform:scaleX(1.0089);-webkit-text-stroke:.45px #7c7c7c;">00005</span>
<span class="t" style="left:300.37px;top:212.97px;font-size:13.7px;line-height:16px;font-weight:700;color:#7c7c7c;transform:scaleX(0.9855);-webkit-text-stroke:.45px #7c7c7c;white-space:pre;">Einblenden  "Test"; auf Demoseite; Grafikfarbe</span>
<span class="t" style="left:312.32px;top:228.97px;font-size:13.7px;line-height:16px;font-weight:700;color:#7c7c7c;transform:scaleX(1.0009);-webkit-text-stroke:.45px #7c7c7c;white-space:pre;">Textgröße 5; Position [459, 336]</span>
<div class="" style="left:181.59px;top:243.75px;width:838.14px;height:16.51px;background:#0a246a"></div>
<span class="t" style="left:183.64px;top:244.97px;font-size:13.7px;line-height:16px;font-weight:700;color:#7f89ab;transform:scaleX(1.0089);-webkit-text-stroke:.45px #7f89ab;">00006</span>
<span class="t" style="left:228.69px;top:244.97px;font-size:13.7px;line-height:16px;font-weight:700;color:#7f89ab;transform:scaleX(0.9433);-webkit-text-stroke:.45px #7f89ab;">Ende</span>
<span class="t" style="left:183.64px;top:260.97px;font-size:13.7px;line-height:16px;font-weight:700;color:#7c7c7c;transform:scaleX(1.0089);-webkit-text-stroke:.45px #7c7c7c;">00007</span>
<span class="t" style="left:300.37px;top:260.97px;font-size:13.7px;line-height:16px;font-weight:700;color:#7c7c7c;transform:scaleX(1.0228);-webkit-text-stroke:.45px #7c7c7c;white-space:pre;">Warten 500 ms</span>
<div class="track" style="left:183.13px;top:576.17px;width:838.49px;height:17.58px;"></div>
<div class="btn" style="left:183.13px;top:576.17px;width:15.19px;height:17.58px;background:#d4d0c8"></div>
<div class="btn" style="left:1006.42px;top:576.17px;width:15.19px;height:17.58px;background:#d4d0c8"></div>
<div class="btn" style="left:198.31px;top:576.17px;width:338.6px;height:17.58px;background:#d4d0c8"></div>
<svg style="left:0;top:0" width="1024" height="768" viewBox="0 0 600 450"><path d="M112.75 340.75v4l-2.2-2zM593.35 340.75v4l2.2-2z" fill="#000"/></svg>
<div style="left:0.0px;top:600.49px;width:1024.0px;height:1.8px;background:#282828"></div>
<div class="" style="left:0.0px;top:602.11px;width:156.67px;height:145.07px;background:#fff"></div>
<div class="" style="left:0.0px;top:602.62px;width:156.67px;height:19.63px;background:#d4d0c8"></div>
<div style="left:0.0px;top:621.4px;width:156.67px;height:1.3px;background:#404040"></div>
<div style="left:0.0px;top:602.62px;width:156.67px;height:1px;background:#fff"></div>
<div style="left:38.57px;top:602.79px;width:1.3px;height:18.43px;background:#404040"></div>
<div style="left:39.94px;top:603.14px;width:1px;height:17.75px;background:#fff"></div>
<span class="t" style="left:3.93px;top:606.02px;font-size:11px;line-height:13px;font-weight:400;color:#000;transform:scaleX(1.1346);-webkit-text-stroke:.2px #000;">E.-Nr.</span>
<div style="left:121.0px;top:602.79px;width:1.3px;height:18.43px;background:#404040"></div>
<div style="left:122.37px;top:603.14px;width:1px;height:17.75px;background:#fff"></div>
<span class="t" style="left:46.08px;top:606.02px;font-size:11px;line-height:13px;font-weight:400;color:#000;transform:scaleX(0.9943);-webkit-text-stroke:.2px #000;">gut/schlecht</span>
<div style="left:154.45px;top:602.79px;width:1.3px;height:18.43px;background:#404040"></div>
<div style="left:155.82px;top:603.14px;width:1px;height:17.75px;background:#fff"></div>
<span class="t" style="left:128.34px;top:606.02px;font-size:11px;line-height:13px;font-weight:400;color:#000;transform:scaleX(1.0225);-webkit-text-stroke:.2px #000;">Wert</span>
<div class="track" style="left:1.02px;top:731.48px;width:154.97px;height:15.19px;"></div>
<div class="btn" style="left:1.02px;top:731.48px;width:14.68px;height:15.19px;background:#d4d0c8"></div>
<div class="btn" style="left:141.31px;top:731.48px;width:14.68px;height:15.19px;background:#d4d0c8"></div>
<div class="btn" style="left:15.7px;top:731.48px;width:122.54px;height:15.19px;background:#d4d0c8"></div>
<svg style="left:0;top:0" width="1024" height="768" viewBox="0 0 600 450"><path d="M5.8999999999999995 431.05v4l-2.2-2zM86.3 431.05v4l2.2-2z" fill="#000"/></svg>
<div style="left:0.0px;top:746.84px;width:156.67px;height:1.3px;background:#404040"></div>
<span class="t" style="left:3.07px;top:625.65px;font-size:11px;line-height:13px;font-weight:400;color:#000;transform:scaleX(1.0000);-webkit-text-stroke:.2px #000;">0</span>
<span class="t" style="left:46.08px;top:625.65px;font-size:11px;line-height:13px;font-weight:400;color:#000;transform:scaleX(0.9725);-webkit-text-stroke:.2px #000;">schlecht</span>
<span class="t" style="left:128.34px;top:625.65px;font-size:11px;line-height:13px;font-weight:400;color:#000;transform:scaleX(1.0000);-webkit-text-stroke:.2px #000;">0</span>
<span class="t" style="left:3.07px;top:639.65px;font-size:11px;line-height:13px;font-weight:400;color:#000;transform:scaleX(1.0000);-webkit-text-stroke:.2px #000;">1</span>
<span class="t" style="left:46.08px;top:639.65px;font-size:11px;line-height:13px;font-weight:400;color:#000;transform:scaleX(0.9819);-webkit-text-stroke:.2px #000;">gut</span>
<span class="t" style="left:128.34px;top:639.65px;font-size:11px;line-height:13px;font-weight:400;color:#000;transform:scaleX(1.0000);-webkit-text-stroke:.2px #000;">1</span>
<span class="t" style="left:3.07px;top:653.65px;font-size:11px;line-height:13px;font-weight:400;color:#000;transform:scaleX(1.0000);-webkit-text-stroke:.2px #000;">20</span>
<span class="t" style="left:46.08px;top:653.65px;font-size:11px;line-height:13px;font-weight:400;color:#000;transform:scaleX(0.9819);-webkit-text-stroke:.2px #000;">gut</span>
<span class="t" style="left:128.34px;top:653.65px;font-size:11px;line-height:13px;font-weight:400;color:#000;transform:scaleX(1.0000);-webkit-text-stroke:.2px #000;">54</span>
<span class="t" style="left:3.07px;top:667.65px;font-size:11px;line-height:13px;font-weight:400;color:#000;transform:scaleX(1.0000);-webkit-text-stroke:.2px #000;">99</span>
<span class="t" style="left:46.08px;top:667.65px;font-size:11px;line-height:13px;font-weight:400;color:#000;transform:scaleX(0.9819);-webkit-text-stroke:.2px #000;">gut</span>
<span class="t" style="left:128.34px;top:667.65px;font-size:11px;line-height:13px;font-weight:400;color:#000;transform:scaleX(1.0000);-webkit-text-stroke:.2px #000;">20</span>
<span class="t" style="left:3.07px;top:681.65px;font-size:11px;line-height:13px;font-weight:400;color:#000;transform:scaleX(1.0000);-webkit-text-stroke:.2px #000;">100</span>
<span class="t" style="left:46.08px;top:681.65px;font-size:11px;line-height:13px;font-weight:400;color:#000;transform:scaleX(0.9819);-webkit-text-stroke:.2px #000;">gut</span>
<span class="t" style="left:128.34px;top:681.65px;font-size:11px;line-height:13px;font-weight:400;color:#000;transform:scaleX(1.0000);-webkit-text-stroke:.2px #000;">11</span>
<div style="left:161.45px;top:600.75px;width:1.8px;height:147.46px;background:#404040"></div>
<div class="" style="left:164.35px;top:602.11px;width:217.94px;height:145.07px;background:#fff"></div>
<div class="" style="left:164.35px;top:602.62px;width:217.94px;height:19.63px;background:#d4d0c8"></div>
<div style="left:164.35px;top:621.4px;width:217.94px;height:1.3px;background:#404040"></div>
<div style="left:164.35px;top:602.62px;width:217.94px;height:1px;background:#fff"></div>
<div style="left:202.92px;top:602.79px;width:1.3px;height:18.43px;background:#404040"></div>
<div style="left:204.29px;top:603.14px;width:1px;height:17.75px;background:#fff"></div>
<span class="t" style="left:169.3px;top:606.02px;font-size:11px;line-height:13px;font-weight:400;color:#000;transform:scaleX(1.0737);-webkit-text-stroke:.2px #000;">P.-Nr.</span>
<div style="left:267.78px;top:602.79px;width:1.3px;height:18.43px;background:#404040"></div>
<div style="left:269.14px;top:603.14px;width:1px;height:17.75px;background:#fff"></div>
<span class="t" style="left:210.26px;top:606.02px;font-size:11px;line-height:13px;font-weight:400;color:#000;transform:scaleX(0.9798);-webkit-text-stroke:.2px #000;">Welt/Bild</span>
<div style="left:325.8px;top:602.79px;width:1.3px;height:18.43px;background:#404040"></div>
<div style="left:327.17px;top:603.14px;width:1px;height:17.75px;background:#fff"></div>
<span class="t" style="left:275.8px;top:606.02px;font-size:11px;line-height:13px;font-weight:400;color:#000;transform:scaleX(0.8691);-webkit-text-stroke:.2px #000;">x</span>
<span class="t" style="left:333.82px;top:606.02px;font-size:11px;line-height:13px;font-weight:400;color:#000;transform:scaleX(0.9309);-webkit-text-stroke:.2px #000;">y</span>
<div class="track" style="left:165.38px;top:731.48px;width:216.23px;height:15.19px;"></div>
<div class="btn" style="left:165.38px;top:731.48px;width:14.68px;height:15.19px;background:#d4d0c8"></div>
<div class="btn" style="left:366.93px;top:731.48px;width:14.68px;height:15.19px;background:#d4d0c8"></div>
<div class="btn" style="left:180.05px;top:731.48px;width:180.05px;height:15.19px;background:#d4d0c8"></div>
<svg style="left:0;top:0" width="1024" height="768" viewBox="0 0 600 450"><path d="M102.19999999999999 431.05v4l-2.2-2zM218.49999999999997 431.05v4l2.2-2z" fill="#000"/></svg>
<div style="left:164.35px;top:746.84px;width:217.94px;height:1.3px;background:#404040"></div>
<span class="t" style="left:168.28px;top:625.65px;font-size:11px;line-height:13px;font-weight:400;color:#000;transform:scaleX(1.0000);-webkit-text-stroke:.2px #000;">0</span>
<span class="t" style="left:210.26px;top:625.65px;font-size:11px;line-height:13px;font-weight:400;color:#000;transform:scaleX(0.9120);-webkit-text-stroke:.2px #000;">Bild</span>
<span class="t" style="left:275.8px;top:625.65px;font-size:11px;line-height:13px;font-weight:400;color:#000;transform:scaleX(1.0000);-webkit-text-stroke:.2px #000;">0</span>
<span class="t" style="left:333.82px;top:625.65px;font-size:11px;line-height:13px;font-weight:400;color:#000;transform:scaleX(1.0000);-webkit-text-stroke:.2px #000;">0</span>
<div style="left:387.75px;top:600.75px;width:1.8px;height:147.46px;background:#404040"></div>
<div class="" style="left:390.49px;top:602.11px;width:361.98px;height:145.07px;background:#fff"></div>
<div class="" style="left:390.49px;top:602.62px;width:361.98px;height:19.63px;background:#d4d0c8"></div>
<div style="left:390.49px;top:621.4px;width:361.98px;height:1.3px;background:#404040"></div>
<div style="left:390.49px;top:602.62px;width:361.98px;height:1px;background:#fff"></div>
<div style="left:429.91px;top:602.79px;width:1.3px;height:18.43px;background:#404040"></div>
<div style="left:431.27px;top:603.14px;width:1px;height:17.75px;background:#fff"></div>
<span class="t" style="left:395.95px;top:606.02px;font-size:11px;line-height:13px;font-weight:400;color:#000;transform:scaleX(1.0002);-webkit-text-stroke:.2px #000;">G.-Nr.</span>
<div style="left:494.76px;top:602.79px;width:1.3px;height:18.43px;background:#404040"></div>
<div style="left:496.13px;top:603.14px;width:1px;height:17.75px;background:#fff"></div>
<span class="t" style="left:437.93px;top:606.02px;font-size:11px;line-height:13px;font-weight:400;color:#000;transform:scaleX(0.9798);-webkit-text-stroke:.2px #000;">Welt/Bild</span>
<div style="left:561.32px;top:602.79px;width:1.3px;height:18.43px;background:#404040"></div>
<div style="left:562.69px;top:603.14px;width:1px;height:17.75px;background:#fff"></div>
<span class="t" style="left:502.78px;top:606.02px;font-size:11px;line-height:13px;font-weight:400;color:#000;transform:scaleX(0.9394);-webkit-text-stroke:.2px #000;">x1</span>
<div style="left:626.69px;top:602.79px;width:1.3px;height:18.43px;background:#404040"></div>
<div style="left:628.05px;top:603.14px;width:1px;height:17.75px;background:#fff"></div>
<span class="t" style="left:568.66px;top:606.02px;font-size:11px;line-height:13px;font-weight:400;color:#000;transform:scaleX(0.9394);-webkit-text-stroke:.2px #000;">y1</span>
<div style="left:692.74px;top:602.79px;width:1.3px;height:18.43px;background:#404040"></div>
<div style="left:694.1px;top:603.14px;width:1px;height:17.75px;background:#fff"></div>
<span class="t" style="left:635.9px;top:606.02px;font-size:11px;line-height:13px;font-weight:400;color:#000;transform:scaleX(0.9394);-webkit-text-stroke:.2px #000;">x2</span>
<span class="t" style="left:700.76px;top:606.02px;font-size:11px;line-height:13px;font-weight:400;color:#000;transform:scaleX(0.9987);-webkit-text-stroke:.2px #000;">y2</span>
<div class="track" style="left:391.51px;top:731.48px;width:360.28px;height:15.19px;"></div>
<div class="btn" style="left:391.51px;top:731.48px;width:14.68px;height:15.19px;background:#d4d0c8"></div>
<div class="btn" style="left:737.11px;top:731.48px;width:14.68px;height:15.19px;background:#d4d0c8"></div>
<div class="btn" style="left:406.19px;top:731.48px;width:322.56px;height:15.19px;background:#d4d0c8"></div>
<svg style="left:0;top:0" width="1024" height="768" viewBox="0 0 600 450"><path d="M234.70000000000002 431.05v4l-2.2-2zM435.4 431.05v4l2.2-2z" fill="#000"/></svg>
<div style="left:390.49px;top:746.84px;width:361.98px;height:1.3px;background:#404040"></div>
<div style="left:758.1px;top:600.75px;width:1.8px;height:147.46px;background:#404040"></div>
<div class="" style="left:761.0px;top:602.11px;width:261.29px;height:145.07px;background:#fff"></div>
<div class="" style="left:761.0px;top:602.62px;width:261.29px;height:19.63px;background:#d4d0c8"></div>
<div style="left:761.0px;top:621.4px;width:261.29px;height:1.3px;background:#404040"></div>
<div style="left:761.0px;top:602.62px;width:261.29px;height:1px;background:#fff"></div>
<div style="left:799.74px;top:602.79px;width:1.3px;height:18.43px;background:#404040"></div>
<div style="left:801.11px;top:603.14px;width:1px;height:17.75px;background:#fff"></div>
<span class="t" style="left:766.29px;top:606.02px;font-size:11px;line-height:13px;font-weight:400;color:#000;transform:scaleX(1.0436);-webkit-text-stroke:.2px #000;">K.-Nr.</span>
<div style="left:865.11px;top:602.79px;width:1.3px;height:18.43px;background:#404040"></div>
<div style="left:866.47px;top:603.14px;width:1px;height:17.75px;background:#fff"></div>
<span class="t" style="left:807.25px;top:606.02px;font-size:11px;line-height:13px;font-weight:400;color:#000;transform:scaleX(0.9798);-webkit-text-stroke:.2px #000;">Welt/Bild</span>
<div style="left:922.97px;top:602.79px;width:1.3px;height:18.43px;background:#404040"></div>
<div style="left:924.33px;top:603.14px;width:1px;height:17.75px;background:#fff"></div>
<span class="t" style="left:873.13px;top:606.02px;font-size:11px;line-height:13px;font-weight:400;color:#000;transform:scaleX(0.8691);-webkit-text-stroke:.2px #000;">x</span>
<div style="left:981.16px;top:602.79px;width:1.3px;height:18.43px;background:#404040"></div>
<div style="left:982.53px;top:603.14px;width:1px;height:17.75px;background:#fff"></div>
<span class="t" style="left:931.84px;top:606.02px;font-size:11px;line-height:13px;font-weight:400;color:#000;transform:scaleX(0.8691);-webkit-text-stroke:.2px #000;">y</span>
<span class="t" style="left:988.5px;top:606.02px;font-size:11px;line-height:13px;font-weight:400;color:#000;transform:scaleX(0.9369);-webkit-text-stroke:.2px #000;">Radius</span>
<div class="track" style="left:762.03px;top:731.48px;width:259.58px;height:15.19px;"></div>
<div class="btn" style="left:762.03px;top:731.48px;width:14.68px;height:15.19px;background:#d4d0c8"></div>
<div class="btn" style="left:1006.93px;top:731.48px;width:14.68px;height:15.19px;background:#d4d0c8"></div>
<div class="btn" style="left:776.7px;top:731.48px;width:224.43px;height:15.19px;background:#d4d0c8"></div>
<svg style="left:0;top:0" width="1024" height="768" viewBox="0 0 600 450"><path d="M451.8 431.05v4l-2.2-2zM593.5000000000001 431.05v4l2.2-2z" fill="#000"/></svg>
<div style="left:761.0px;top:746.84px;width:261.29px;height:1.3px;background:#404040"></div>
<div class="" style="left:0.0px;top:749.57px;width:1024.0px;height:18.43px;background:#d4d0c8"></div>
<span class="t" style="left:1.71px;top:753.65px;font-size:11px;line-height:13px;font-weight:400;color:#000;transform:scaleX(0.9709);-webkit-text-stroke:.2px #000;">Drücken Sie F1, um Hilfe zu erhalten.</span>
<div class="stat" style="left:523.95px;top:752.64px;width:116.39px;height:14.68px;"></div>
<span class="t" style="left:527.7px;top:753.65px;font-size:11px;line-height:13px;font-weight:400;color:#000;transform:scaleX(0.9420);-webkit-text-stroke:.2px #000;">TCP: 114</span>
<div class="stat" style="left:644.1px;top:752.64px;width:103.42px;height:14.68px;"></div>
<span class="t" style="left:647.51px;top:753.65px;font-size:11px;line-height:13px;font-weight:400;color:#000;transform:scaleX(0.9746);-webkit-text-stroke:.2px #000;">Standbild</span>
<div class="stat" style="left:750.93px;top:752.64px;width:48.47px;height:14.68px;"></div>
<span class="t" style="left:753.66px;top:753.65px;font-size:11px;line-height:13px;font-weight:400;color:#000;transform:scaleX(0.9087);-webkit-text-stroke:.2px #000;">Kamera 0</span>
<div class="stat" style="left:803.84px;top:752.64px;width:36.86px;height:14.68px;"></div>
<span class="t" style="left:806.57px;top:753.65px;font-size:11px;line-height:13px;font-weight:400;color:#000;transform:scaleX(0.8969);-webkit-text-stroke:.2px #000;">Seite 0</span>
<div class="stat" style="left:844.46px;top:752.64px;width:54.95px;height:14.68px;"></div>
<span class="t" style="left:847.19px;top:753.65px;font-size:11px;line-height:13px;font-weight:400;color:#000;transform:scaleX(0.8810);-webkit-text-stroke:.2px #000;">Demo EIN</span>
<div class="stat" style="left:903.85px;top:752.64px;width:53.93px;height:14.68px;"></div>
<span class="t" style="left:910.68px;top:753.65px;font-size:11px;line-height:13px;font-weight:400;color:#000;transform:scaleX(1.0486);-webkit-text-stroke:.2px #000;">7/8</span>
<div class="stat" style="left:962.22px;top:752.64px;width:50.18px;height:14.68px;"></div>
<span class="t" style="left:965.29px;top:753.65px;font-size:11px;line-height:13px;font-weight:400;color:#000;transform:scaleX(1.0360);-webkit-text-stroke:.2px #000;">15:27:10</span>
<div class="stat" style="left:1016.15px;top:752.64px;width:8.87px;height:14.68px;"></div>
<div class="raised" style="left:402.43px;top:291.67px;width:324.95px;height:282.79px;background:#d4d0c8"></div>
<div class="" style="left:405.33px;top:294.06px;width:319.32px;height:17.58px;background:linear-gradient(90deg,#808080,#c0c0c0)"></div>
<div class="" style="left:406.87px;top:297.98px;width:13.65px;height:10.24px;background:#fff;border-top:2px solid #2040c0;box-sizing:border-box;outline:0"></div>
<span class="t" style="left:423.25px;top:296.26px;font-size:11px;line-height:13px;font-weight:700;color:#d8d4cc;transform:scaleX(1.0861);-webkit-text-stroke:.2px #d8d4cc;">Monitorfenster</span>
<div class="btn" style="left:672px;top:297px;width:16px;height:14px;background:#d4d0c8"></div>
<svg style="left:672px;top:297px" width="16" height="14" viewBox="0 0 16 14"><rect x="4" y="9" width="6" height="2" fill="#000"/></svg>
<div class="btn" style="left:688px;top:297px;width:16px;height:14px;background:#d4d0c8"></div>
<svg style="left:688px;top:297px" width="16" height="14" viewBox="0 0 16 14"><path d="M3.5 2.5h8v8h-8zM3.5 3.5h8" fill="none" stroke="#808080"/><path d="M4.5 4.5h8v8" fill="none" stroke="#fff" opacity=".0"/></svg>
<div class="btn" style="left:706px;top:297px;width:16px;height:14px;background:#d4d0c8"></div>
<svg style="left:706px;top:297px" width="16" height="14" viewBox="0 0 16 14"><path d="M4 3l7 7M11 3l-7 7" stroke="#000" stroke-width="1.7" fill="none"/></svg>
<span class="t" style="left:409.6px;top:315.04px;font-size:11px;line-height:13px;font-weight:400;color:#707070;transform:scaleX(0.9701);-webkit-text-stroke:.2px #707070;"><u>D</u>atei</span>
<span class="t" style="left:447.15px;top:315.04px;font-size:11px;line-height:13px;font-weight:400;color:#707070;transform:scaleX(0.9554);-webkit-text-stroke:.2px #707070;"><u>A</u>nsicht</span>
<svg style="left:404.82px;top:331.78px;background:#141414" width="319.49" height="239.62" viewBox="0 0 187.2 140.4"><defs>
<filter id="nz" x="0" y="0" width="100%" height="100%"><feTurbulence type="fractalNoise" baseFrequency="0.3" numOctaves="3" seed="11"/><feColorMatrix type="matrix" values=".8 .8 .8 0 -.8  .8 .8 .8 0 -.8  .8 .8 .8 0 -.8  0 0 0 0 1"/></filter>
<filter id="nz2" x="0" y="0" width="100%" height="100%"><feTurbulence type="fractalNoise" baseFrequency="0.35" numOctaves="2" seed="3"/><feColorMatrix type="matrix" values="0 0 0 0 1  0 0 0 0 1  0 0 0 0 1  .5 .5 .5 0 -.62"/></filter>
<radialGradient id="bgg" cx="0.6260683760683761" cy="0.5313390313390313" r=".8"><stop offset="0" stop-color="#1e1e1e"/><stop offset=".4" stop-color="#181818"/><stop offset=".7" stop-color="#131313"/><stop offset="1" stop-color="#0f0f0f"/></radialGradient>
<radialGradient id="ll" gradientUnits="userSpaceOnUse" cx="20" cy="130.4" r="110"><stop offset="0" stop-color="#fff" stop-opacity=".06"/><stop offset="1" stop-color="#fff" stop-opacity="0"/></radialGradient>
<linearGradient id="rg" gradientUnits="userSpaceOnUse" x1="187.2" y1="0" x2="0" y2="140.4"><stop offset="0" stop-color="#fff" stop-opacity=".15"/><stop offset=".45" stop-color="#fff" stop-opacity=".35"/><stop offset="1" stop-color="#fff" stop-opacity="1"/></linearGradient>
<radialGradient id="top" cx=".45" cy=".52" r=".52"><stop offset="0" stop-color="#686868"/><stop offset=".7" stop-color="#606060"/><stop offset=".93" stop-color="#545454"/><stop offset="1" stop-color="#404040"/></radialGradient>
<clipPath id="cu"><rect x="0" y="0" width="187.2" height="74.6"/></clipPath>
<clipPath id="cl"><rect x="0" y="74.6" width="187.2" height="140.4"/></clipPath>
<clipPath id="cc"><circle cx="117.19999999999999" cy="74.6" r="49.9"/></clipPath>
</defs>
<rect width="187.2" height="140.4" fill="url(#bgg)"/><rect width="187.2" height="140.4" fill="url(#ll)"/>
<circle cx="113.19999999999999" cy="71.6" r="60" fill="none" stroke="url(#rg)" stroke-opacity="0.03" stroke-width="7"/><circle cx="113.19999999999999" cy="71.6" r="72" fill="none" stroke="url(#rg)" stroke-opacity="0.035" stroke-width="4"/><circle cx="113.19999999999999" cy="71.6" r="80" fill="none" stroke="url(#rg)" stroke-opacity="0.06" stroke-width="3"/><circle cx="113.19999999999999" cy="71.6" r="89" fill="none" stroke="url(#rg)" stroke-opacity="0.04" stroke-width="5"/><circle cx="113.19999999999999" cy="71.6" r="98" fill="none" stroke="url(#rg)" stroke-opacity="0.07" stroke-width="3.5"/><circle cx="113.19999999999999" cy="71.6" r="106" fill="none" stroke="url(#rg)" stroke-opacity="0.035" stroke-width="5"/><circle cx="113.19999999999999" cy="71.6" r="114" fill="none" stroke="url(#rg)" stroke-opacity="0.06" stroke-width="3"/><circle cx="113.19999999999999" cy="71.6" r="123" fill="none" stroke="url(#rg)" stroke-opacity="0.05" stroke-width="5"/><circle cx="113.19999999999999" cy="71.6" r="134" fill="none" stroke="url(#rg)" stroke-opacity="0.065" stroke-width="3.5"/><circle cx="113.19999999999999" cy="71.6" r="146" fill="none" stroke="url(#rg)" stroke-opacity="0.045" stroke-width="6"/><circle cx="113.19999999999999" cy="71.6" r="159" fill="none" stroke="url(#rg)" stroke-opacity="0.055" stroke-width="4"/>
<rect width="187.2" height="140.4" filter="url(#nz2)" opacity=".07"/>
<circle cx="117.19999999999999" cy="74.6" r="51.1" fill="#141414" opacity=".7"/>
<g clip-path="url(#cu)"><circle cx="117.19999999999999" cy="74.6" r="49.9" fill="url(#top)"/></g>
<g clip-path="url(#cc)"><rect x="0" y="0" width="187.2" height="74.6" filter="url(#nz)" opacity=".22"/>
<circle cx="105.19999999999999" cy="45.599999999999994" r="1.6" fill="#383838" opacity=".8"/><circle cx="129.7" cy="53.599999999999994" r="1.5" fill="#3c3c3c" opacity=".8"/><circle cx="104.19999999999999" cy="55.099999999999994" r="1.3" fill="#404040" opacity=".7"/><circle cx="100.19999999999999" cy="50.599999999999994" r="1" fill="#484848" opacity=".7"/></g>
<g clip-path="url(#cl)"><circle cx="117.19999999999999" cy="74.6" r="49.9" fill="#fff"/></g>
<rect x="67.59999999999998" y="74.1" width="99.2" height="1.2" fill="#fff"/></svg>
<div class="raised" style="left:748.89px;top:118.78px;width:272.04px;height:211.11px;background:#c0c0c0"></div>
<div class="" style="left:751.62px;top:121.0px;width:266.58px;height:16.9px;background:linear-gradient(90deg,#808080,#b8b8b8)"></div>
<span class="t" style="left:753.32px;top:122.87px;font-size:11px;line-height:13px;font-weight:700;color:#d8d4cc;transform:scaleX(1.0307);-webkit-text-stroke:.2px #d8d4cc;">Video Control Panel</span>
<div class="btn" style="left:984px;top:123px;width:16px;height:14px;background:#d4d0c8"></div>
<svg style="left:984px;top:123px" width="16" height="14" viewBox="0 0 16 14"><text x="8" y="11.5" font-family="Liberation Sans" font-weight="700" font-size="12" text-anchor="middle" fill="#000">?</text></svg>
<div class="btn" style="left:1002px;top:123px;width:16px;height:14px;background:#d4d0c8"></div>
<svg style="left:1002px;top:123px" width="16" height="14" viewBox="0 0 16 14"><path d="M4 3l7 7M11 3l-7 7" stroke="#000" stroke-width="1.7" fill="none"/></svg>
<div class="btn" style="left:761.17px;top:150.53px;width:82.6px;height:18.77px;background:#d4d0c8"></div>
<span class="t" style="left:770.05px;top:153.24px;font-size:11px;line-height:13px;font-weight:400;color:#000;transform:scaleX(0.9639);-webkit-text-stroke:.2px #000;"><u>B</u>ildaufnahme</span>
<div class="btn" style="left:761.17px;top:179.71px;width:82.6px;height:18.77px;background:#d4d0c8"></div>
<span class="t" style="left:770.05px;top:182.43px;font-size:11px;line-height:13px;font-weight:400;color:#000;transform:scaleX(0.9321);-webkit-text-stroke:.2px #000;">G<u>r</u>afik löschen</span>
<div class="btn" style="left:846.85px;top:295.25px;width:74.07px;height:19.8px;background:#d4d0c8"></div>
<span class="t" style="left:861.18px;top:298.48px;font-size:11px;line-height:13px;font-weight:400;color:#000;transform:scaleX(0.9489);-webkit-text-stroke:.2px #000;">Schließen</span>
<div class="sunk" style="left:862.21px;top:144.38px;width:13.14px;height:13.14px;background:#fff"></div>
<svg style="left:862.21px;top:144.38px" width="13.14" height="13.14" viewBox="0 0 13 13"><path d="M3 6l2.2 2.4L10 3.4" fill="none" stroke="#000" stroke-width="1.9"/></svg>
<div class="sunk" style="left:862.21px;top:162.82px;width:13.14px;height:13.14px;background:#c8c4bc"></div>
<div class="sunk" style="left:862.21px;top:180.91px;width:13.14px;height:13.14px;background:#fff"></div>
<span class="t" style="left:880.98px;top:144.71px;font-size:11px;line-height:13px;font-weight:400;color:#000;transform:scaleX(0.9360);-webkit-text-stroke:.2px #000;"><u>D</u>emomodus</span>
<span class="t" style="left:882.01px;top:164.17px;font-size:11px;line-height:13px;font-weight:400;color:#fff;transform:scaleX(0.9477);-webkit-text-stroke:.2px #fff;">Farbausgabe</span>
<span class="t" style="left:880.98px;top:163.14px;font-size:11px;line-height:13px;font-weight:400;color:#8c8c8c;transform:scaleX(0.9477);-webkit-text-stroke:.2px #8c8c8c;"><u>F</u>arbausgabe</span>
<span class="t" style="left:880.98px;top:181.23px;font-size:11px;line-height:13px;font-weight:400;color:#000;transform:scaleX(0.9874);-webkit-text-stroke:.2px #000;"><u>Ü</u>ber- / Unterbelichtung</span>
<div class="grp" style="left:856.75px;top:203.43px;width:153.6px;height:26.62px;"></div>
<div class="" style="left:862.21px;top:198.31px;width:39.94px;height:10.24px;background:#c0c0c0"></div>
<span class="t" style="left:864.26px;top:197.11px;font-size:11px;line-height:13px;font-weight:400;color:#000;transform:scaleX(0.9302);-webkit-text-stroke:.2px #000;">Kamera</span>
<div class="grp" style="left:762.2px;top:242.01px;width:87.38px;height:47.79px;"></div>
<div class="" style="left:769.71px;top:236.89px;width:59.05px;height:10.24px;background:#c0c0c0"></div>
<span class="t" style="left:771.75px;top:235.68px;font-size:11px;line-height:13px;font-weight:400;color:#000;transform:scaleX(0.9909);-webkit-text-stroke:.2px #000;">Videomode</span>
<div class="grp" style="left:856.75px;top:242.01px;width:153.6px;height:47.79px;"></div>
<div class="" style="left:862.21px;top:236.89px;width:50.18px;height:10.24px;background:#c0c0c0"></div>
<span class="t" style="left:864.26px;top:235.68px;font-size:11px;line-height:13px;font-weight:400;color:#000;transform:scaleX(0.9660);-webkit-text-stroke:.2px #000;">Bildseiten</span>
<svg style="left:861.33px;top:210.58px" width="12" height="12" viewBox="0 0 12 12"><circle cx="6" cy="6" r="5.5" fill="#fff"/><path d="M1.9 10.1A5.8 5.8 0 0 1 10.1 1.9" fill="none" stroke="#808080" stroke-width="1.1"/><path d="M2.7 9.3A4.6 4.6 0 0 1 9.3 2.7" fill="none" stroke="#404040" stroke-width="1"/><path d="M1.9 10.1A5.8 5.8 0 0 0 10.1 1.9" fill="none" stroke="#fff" stroke-width="1.1"/><path d="M2.7 9.3A4.6 4.6 0 0 0 9.3 2.7" fill="none" stroke="#d4d0c8" stroke-width="1"/><circle cx="6" cy="6" r="2" fill="#000"/></svg>
<span class="t" style="left:878.93px;top:210.25px;font-size:11px;line-height:13px;font-weight:400;color:#000;transform:scaleX(1.0000);-webkit-text-stroke:.2px #000;">0</span>
<svg style="left:861.33px;top:251.88px" width="12" height="12" viewBox="0 0 12 12"><circle cx="6" cy="6" r="5.5" fill="#fff"/><path d="M1.9 10.1A5.8 5.8 0 0 1 10.1 1.9" fill="none" stroke="#808080" stroke-width="1.1"/><path d="M2.7 9.3A4.6 4.6 0 0 1 9.3 2.7" fill="none" stroke="#404040" stroke-width="1"/><path d="M1.9 10.1A5.8 5.8 0 0 0 10.1 1.9" fill="none" stroke="#fff" stroke-width="1.1"/><path d="M2.7 9.3A4.6 4.6 0 0 0 9.3 2.7" fill="none" stroke="#d4d0c8" stroke-width="1"/><circle cx="6" cy="6" r="2" fill="#000"/></svg>
<span class="t" style="left:878.93px;top:251.55px;font-size:11px;line-height:13px;font-weight:400;color:#000;transform:scaleX(1.0000);-webkit-text-stroke:.2px #000;">0</span>
<svg style="left:861.33px;top:269.97px" width="12" height="12" viewBox="0 0 12 12"><circle cx="6" cy="6" r="5.5" fill="#c8c4bc"/><path d="M1.9 10.1A5.8 5.8 0 0 1 10.1 1.9" fill="none" stroke="#808080" stroke-width="1.1"/><path d="M2.7 9.3A4.6 4.6 0 0 1 9.3 2.7" fill="none" stroke="#404040" stroke-width="1"/><path d="M1.9 10.1A5.8 5.8 0 0 0 10.1 1.9" fill="none" stroke="#fff" stroke-width="1.1"/><path d="M2.7 9.3A4.6 4.6 0 0 0 9.3 2.7" fill="none" stroke="#d4d0c8" stroke-width="1"/></svg>
<span class="t" style="left:879.96px;top:270.66px;font-size:11px;line-height:13px;font-weight:400;color:#fff;transform:scaleX(1.0000);-webkit-text-stroke:.2px #fff;">4</span>
<span class="t" style="left:878.93px;top:269.64px;font-size:11px;line-height:13px;font-weight:400;color:#8c8c8c;transform:scaleX(1.0000);-webkit-text-stroke:.2px #8c8c8c;">4</span>
<svg style="left:901.26px;top:210.58px" width="12" height="12" viewBox="0 0 12 12"><circle cx="6" cy="6" r="5.5" fill="#c8c4bc"/><path d="M1.9 10.1A5.8 5.8 0 0 1 10.1 1.9" fill="none" stroke="#808080" stroke-width="1.1"/><path d="M2.7 9.3A4.6 4.6 0 0 1 9.3 2.7" fill="none" stroke="#404040" stroke-width="1"/><path d="M1.9 10.1A5.8 5.8 0 0 0 10.1 1.9" fill="none" stroke="#fff" stroke-width="1.1"/><path d="M2.7 9.3A4.6 4.6 0 0 0 9.3 2.7" fill="none" stroke="#d4d0c8" stroke-width="1"/></svg>
<span class="t" style="left:919.89px;top:211.27px;font-size:11px;line-height:13px;font-weight:400;color:#fff;transform:scaleX(1.0000);-webkit-text-stroke:.2px #fff;">1</span>
<span class="t" style="left:918.87px;top:210.25px;font-size:11px;line-height:13px;font-weight:400;color:#8c8c8c;transform:scaleX(1.0000);-webkit-text-stroke:.2px #8c8c8c;">1</span>
<svg style="left:901.26px;top:251.88px" width="12" height="12" viewBox="0 0 12 12"><circle cx="6" cy="6" r="5.5" fill="#fff"/><path d="M1.9 10.1A5.8 5.8 0 0 1 10.1 1.9" fill="none" stroke="#808080" stroke-width="1.1"/><path d="M2.7 9.3A4.6 4.6 0 0 1 9.3 2.7" fill="none" stroke="#404040" stroke-width="1"/><path d="M1.9 10.1A5.8 5.8 0 0 0 10.1 1.9" fill="none" stroke="#fff" stroke-width="1.1"/><path d="M2.7 9.3A4.6 4.6 0 0 0 9.3 2.7" fill="none" stroke="#d4d0c8" stroke-width="1"/></svg>
<span class="t" style="left:918.87px;top:251.55px;font-size:11px;line-height:13px;font-weight:400;color:#000;transform:scaleX(1.0000);-webkit-text-stroke:.2px #000;">1</span>
<svg style="left:901.26px;top:269.97px" width="12" height="12" viewBox="0 0 12 12"><circle cx="6" cy="6" r="5.5" fill="#c8c4bc"/><path d="M1.9 10.1A5.8 5.8 0 0 1 10.1 1.9" fill="none" stroke="#808080" stroke-width="1.1"/><path d="M2.7 9.3A4.6 4.6 0 0 1 9.3 2.7" fill="none" stroke="#404040" stroke-width="1"/><path d="M1.9 10.1A5.8 5.8 0 0 0 10.1 1.9" fill="none" stroke="#fff" stroke-width="1.1"/><path d="M2.7 9.3A4.6 4.6 0 0 0 9.3 2.7" fill="none" stroke="#d4d0c8" stroke-width="1"/></svg>
<span class="t" style="left:919.89px;top:270.66px;font-size:11px;line-height:13px;font-weight:400;color:#fff;transform:scaleX(1.0000);-webkit-text-stroke:.2px #fff;">5</span>
<span class="t" style="left:918.87px;top:269.64px;font-size:11px;line-height:13px;font-weight:400;color:#8c8c8c;transform:scaleX(1.0000);-webkit-text-stroke:.2px #8c8c8c;">5</span>
<svg style="left:939.83px;top:210.58px" width="12" height="12" viewBox="0 0 12 12"><circle cx="6" cy="6" r="5.5" fill="#c8c4bc"/><path d="M1.9 10.1A5.8 5.8 0 0 1 10.1 1.9" fill="none" stroke="#808080" stroke-width="1.1"/><path d="M2.7 9.3A4.6 4.6 0 0 1 9.3 2.7" fill="none" stroke="#404040" stroke-width="1"/><path d="M1.9 10.1A5.8 5.8 0 0 0 10.1 1.9" fill="none" stroke="#fff" stroke-width="1.1"/><path d="M2.7 9.3A4.6 4.6 0 0 0 9.3 2.7" fill="none" stroke="#d4d0c8" stroke-width="1"/></svg>
<span class="t" style="left:958.46px;top:211.27px;font-size:11px;line-height:13px;font-weight:400;color:#fff;transform:scaleX(1.0000);-webkit-text-stroke:.2px #fff;">2</span>
<span class="t" style="left:957.44px;top:210.25px;font-size:11px;line-height:13px;font-weight:400;color:#8c8c8c;transform:scaleX(1.0000);-webkit-text-stroke:.2px #8c8c8c;">2</span>
<svg style="left:939.83px;top:251.88px" width="12" height="12" viewBox="0 0 12 12"><circle cx="6" cy="6" r="5.5" fill="#fff"/><path d="M1.9 10.1A5.8 5.8 0 0 1 10.1 1.9" fill="none" stroke="#808080" stroke-width="1.1"/><path d="M2.7 9.3A4.6 4.6 0 0 1 9.3 2.7" fill="none" stroke="#404040" stroke-width="1"/><path d="M1.9 10.1A5.8 5.8 0 0 0 10.1 1.9" fill="none" stroke="#fff" stroke-width="1.1"/><path d="M2.7 9.3A4.6 4.6 0 0 0 9.3 2.7" fill="none" stroke="#d4d0c8" stroke-width="1"/></svg>
<span class="t" style="left:957.44px;top:251.55px;font-size:11px;line-height:13px;font-weight:400;color:#000;transform:scaleX(1.0000);-webkit-text-stroke:.2px #000;">2</span>
<svg style="left:939.83px;top:269.97px" width="12" height="12" viewBox="0 0 12 12"><circle cx="6" cy="6" r="5.5" fill="#c8c4bc"/><path d="M1.9 10.1A5.8 5.8 0 0 1 10.1 1.9" fill="none" stroke="#808080" stroke-width="1.1"/><path d="M2.7 9.3A4.6 4.6 0 0 1 9.3 2.7" fill="none" stroke="#404040" stroke-width="1"/><path d="M1.9 10.1A5.8 5.8 0 0 0 10.1 1.9" fill="none" stroke="#fff" stroke-width="1.1"/><path d="M2.7 9.3A4.6 4.6 0 0 0 9.3 2.7" fill="none" stroke="#d4d0c8" stroke-width="1"/></svg>
<span class="t" style="left:958.46px;top:270.66px;font-size:11px;line-height:13px;font-weight:400;color:#fff;transform:scaleX(1.0000);-webkit-text-stroke:.2px #fff;">6</span>
<span class="t" style="left:957.44px;top:269.64px;font-size:11px;line-height:13px;font-weight:400;color:#8c8c8c;transform:scaleX(1.0000);-webkit-text-stroke:.2px #8c8c8c;">6</span>
<svg style="left:977.72px;top:210.58px" width="12" height="12" viewBox="0 0 12 12"><circle cx="6" cy="6" r="5.5" fill="#c8c4bc"/><path d="M1.9 10.1A5.8 5.8 0 0 1 10.1 1.9" fill="none" stroke="#808080" stroke-width="1.1"/><path d="M2.7 9.3A4.6 4.6 0 0 1 9.3 2.7" fill="none" stroke="#404040" stroke-width="1"/><path d="M1.9 10.1A5.8 5.8 0 0 0 10.1 1.9" fill="none" stroke="#fff" stroke-width="1.1"/><path d="M2.7 9.3A4.6 4.6 0 0 0 9.3 2.7" fill="none" stroke="#d4d0c8" stroke-width="1"/></svg>
<span class="t" style="left:996.35px;top:211.27px;font-size:11px;line-height:13px;font-weight:400;color:#fff;transform:scaleX(1.0000);-webkit-text-stroke:.2px #fff;">3</span>
<span class="t" style="left:995.33px;top:210.25px;font-size:11px;line-height:13px;font-weight:400;color:#8c8c8c;transform:scaleX(1.0000);-webkit-text-stroke:.2px #8c8c8c;">3</span>
<svg style="left:977.72px;top:251.88px" width="12" height="12" viewBox="0 0 12 12"><circle cx="6" cy="6" r="5.5" fill="#fff"/><path d="M1.9 10.1A5.8 5.8 0 0 1 10.1 1.9" fill="none" stroke="#808080" stroke-width="1.1"/><path d="M2.7 9.3A4.6 4.6 0 0 1 9.3 2.7" fill="none" stroke="#404040" stroke-width="1"/><path d="M1.9 10.1A5.8 5.8 0 0 0 10.1 1.9" fill="none" stroke="#fff" stroke-width="1.1"/><path d="M2.7 9.3A4.6 4.6 0 0 0 9.3 2.7" fill="none" stroke="#d4d0c8" stroke-width="1"/></svg>
<span class="t" style="left:995.33px;top:251.55px;font-size:11px;line-height:13px;font-weight:400;color:#000;transform:scaleX(1.0000);-webkit-text-stroke:.2px #000;">3</span>
<svg style="left:977.72px;top:269.97px" width="12" height="12" viewBox="0 0 12 12"><circle cx="6" cy="6" r="5.5" fill="#c8c4bc"/><path d="M1.9 10.1A5.8 5.8 0 0 1 10.1 1.9" fill="none" stroke="#808080" stroke-width="1.1"/><path d="M2.7 9.3A4.6 4.6 0 0 1 9.3 2.7" fill="none" stroke="#404040" stroke-width="1"/><path d="M1.9 10.1A5.8 5.8 0 0 0 10.1 1.9" fill="none" stroke="#fff" stroke-width="1.1"/><path d="M2.7 9.3A4.6 4.6 0 0 0 9.3 2.7" fill="none" stroke="#d4d0c8" stroke-width="1"/></svg>
<span class="t" style="left:996.35px;top:270.66px;font-size:11px;line-height:13px;font-weight:400;color:#fff;transform:scaleX(1.0000);-webkit-text-stroke:.2px #fff;">7</span>
<span class="t" style="left:995.33px;top:269.64px;font-size:11px;line-height:13px;font-weight:400;color:#8c8c8c;transform:scaleX(1.0000);-webkit-text-stroke:.2px #8c8c8c;">7</span>
<svg style="left:769.85px;top:251.88px" width="12" height="12" viewBox="0 0 12 12"><circle cx="6" cy="6" r="5.5" fill="#fff"/><path d="M1.9 10.1A5.8 5.8 0 0 1 10.1 1.9" fill="none" stroke="#808080" stroke-width="1.1"/><path d="M2.7 9.3A4.6 4.6 0 0 1 9.3 2.7" fill="none" stroke="#404040" stroke-width="1"/><path d="M1.9 10.1A5.8 5.8 0 0 0 10.1 1.9" fill="none" stroke="#fff" stroke-width="1.1"/><path d="M2.7 9.3A4.6 4.6 0 0 0 9.3 2.7" fill="none" stroke="#d4d0c8" stroke-width="1"/></svg>
<span class="t" style="left:786.77px;top:251.55px;font-size:11px;line-height:13px;font-weight:400;color:#000;transform:scaleX(0.9696);-webkit-text-stroke:.2px #000;"><u>L</u>ivebild</span>
<svg style="left:769.85px;top:270.31px" width="12" height="12" viewBox="0 0 12 12"><circle cx="6" cy="6" r="5.5" fill="#fff"/><path d="M1.9 10.1A5.8 5.8 0 0 1 10.1 1.9" fill="none" stroke="#808080" stroke-width="1.1"/><path d="M2.7 9.3A4.6 4.6 0 0 1 9.3 2.7" fill="none" stroke="#404040" stroke-width="1"/><path d="M1.9 10.1A5.8 5.8 0 0 0 10.1 1.9" fill="none" stroke="#fff" stroke-width="1.1"/><path d="M2.7 9.3A4.6 4.6 0 0 0 9.3 2.7" fill="none" stroke="#d4d0c8" stroke-width="1"/><circle cx="6" cy="6" r="2" fill="#000"/></svg>
<span class="t" style="left:786.77px;top:269.98px;font-size:11px;line-height:13px;font-weight:400;color:#000;transform:scaleX(0.9697);-webkit-text-stroke:.2px #000;"><u>S</u>peicherbild</span></div></body></html>
